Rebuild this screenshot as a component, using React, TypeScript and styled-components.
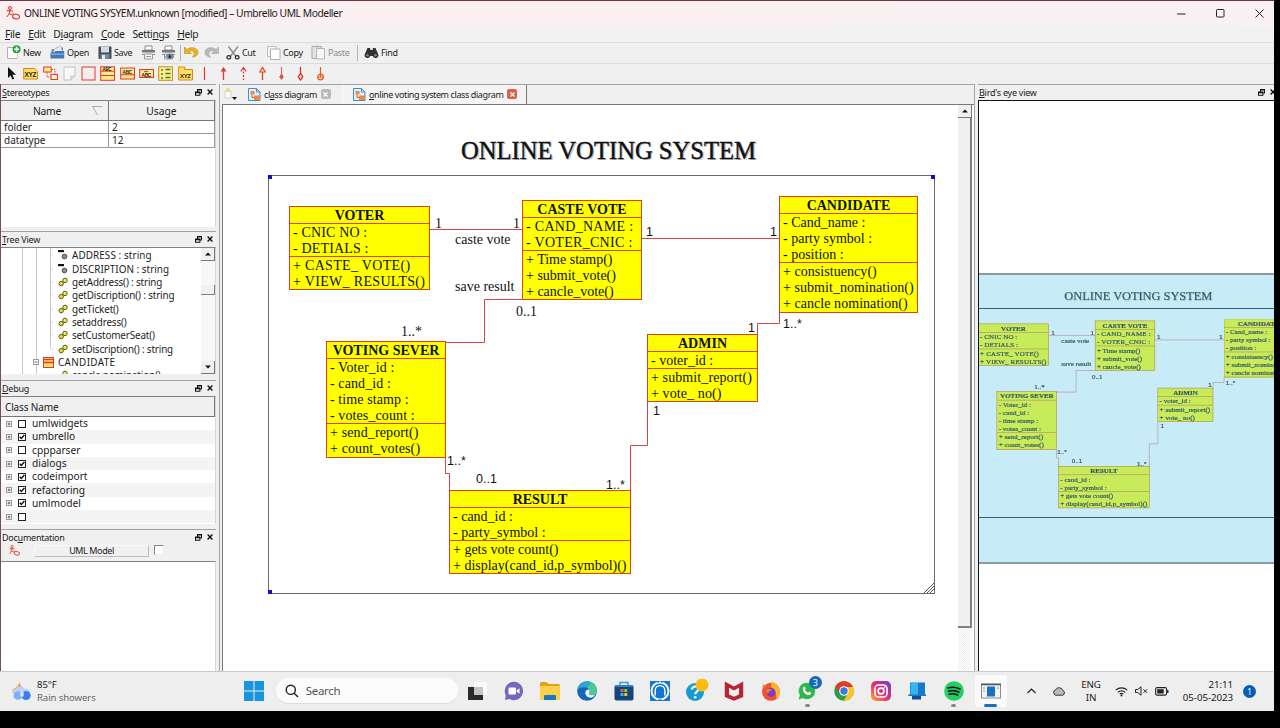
import React from "react";
import styled, { createGlobalStyle } from "styled-components";

const ui = `"Noto Sans", "Open Sans", sans-serif`;

const Global = createGlobalStyle`
  html, body { margin: 0; padding: 0; background: #000; }
  *, *::before, *::after { box-sizing: border-box; }
  body { width: 1280px; height: 728px; overflow: hidden; }
  svg { display: block; flex: none; }
`;

/* ---------- window frame ---------- */

const Screen = styled.div`
  width: 1274px;
  height: 711px;
  display: flex;
  flex-direction: column;
  background: #f0f0f0;
  color: #1b1b1b;
  font-family: ${ui};
  overflow: hidden;
`;

const TitleBar = styled.header`
  height: 26px;
  flex: none;
  display: flex;
  align-items: center;
  padding-left: 6px;
  padding-bottom: 1px;
  border-top: 1px solid #6a3a44;
  background: linear-gradient(90deg, #fbeff0, #f9f1f4);
`;

const TitleText = styled.div`
  flex: 1;
  padding-left: 4px;
  font-size: 10.3px;
  letter-spacing: -0.45px;
  white-space: pre;
`;

const CaptionButtons = styled.div`
  display: flex;
  gap: 28px;
  padding-right: 9px;
`;

const MenuBar = styled.nav`
  height: 16px;
  flex: none;
  display: flex;
  align-items: center;
  gap: 8px;
  padding-left: 5px;
  background: #f3f2f2;
  font-size: 10.3px;
  letter-spacing: -0.32px;
`;

const ToolBar = styled.div<{ $h: number }>`
  height: ${(p) => p.$h}px;
  flex: none;
  display: flex;
  align-items: center;
  padding-bottom: 1px;
  border-top: 1px solid #dcdcdc;
  background: #f0f0f0;
`;

const Tool = styled.div<{ $w: number; $pad?: number; $off?: boolean }>`
  width: ${(p) => p.$w}px;
  flex: none;
  display: flex;
  align-items: center;
  gap: 2px;
  padding-left: ${(p) => p.$pad ?? 0}px;
  font-size: 9px;
  letter-spacing: -0.32px;
  white-space: nowrap;
  color: ${(p) => (p.$off ? "#8c8c8c" : "#1b1b1b")};
`;

const ToolRule = styled.div`
  width: 1px;
  height: 16px;
  margin-right: 3px;
  background: #b4b4b4;
`;

const Body = styled.main`
  flex: 1;
  min-height: 0;
  display: flex;
`;

/* ---------- docks ---------- */

const LeftDock = styled.aside`
  width: 219px;
  flex: none;
  display: flex;
  flex-direction: column;
  border-left: 1px solid #6e5254;
  padding-right: 3px;
`;

const Dock = styled.section<{ $h?: number }>`
  ${(p) => (p.$h ? `height: ${p.$h}px; flex: none;` : "flex: 1; min-height: 0;")}
  display: flex;
  flex-direction: column;
  border-top: 1px solid #a2a2a2;
`;

const DockHead = styled.div`
  height: 15px;
  flex: none;
  display: flex;
  align-items: center;
  justify-content: space-between;
  padding: 0 3px 1px 1px;
  font-size: 9px;
  letter-spacing: -0.25px;
  white-space: nowrap;
`;

const DockButtons = styled.div`
  display: flex;
  gap: 5px;
`;

const DockBody = styled.div<{ $h?: number }>`
  ${(p) => (p.$h ? `height: ${p.$h}px; flex: none;` : "flex: 1; min-height: 0;")}
  border-top: 1px solid #828282;
  border-right: 1px solid #d8d8d8;
  background: #fff;
  overflow: hidden;
`;

const Table = styled.div`
  display: grid;
  grid-template-columns: 108px 106px;
  font-size: 10px;
`;

const HeadCell = styled.div`
  height: 20px;
  display: flex;
  align-items: center;
  justify-content: center;
  gap: 31px;
  background: #f0f0f0;
  border-right: 1px solid #777;
  border-bottom: 1px solid #777;
  font-size: 10.3px;
`;

const SortName = styled.span`
  padding-left: 27px;
  letter-spacing: -0.2px;
`;

const Cell = styled.div`
  height: 13.4px;
  line-height: 12px;
  padding-left: 3px;
  border-right: 1px solid #999;
  border-bottom: 1px solid #999;
`;

const TreeBox = styled.div`
  height: 126px;
  display: flex;
`;

const TreeList = styled.div`
  flex: 1;
  overflow: hidden;
  padding-top: 0.5px;
  background: linear-gradient(#c8c8c8, #c8c8c8) 21px 0 / 1px 100% no-repeat,
    linear-gradient(#c8c8c8, #c8c8c8) 35px 0 / 1px 100% no-repeat,
    linear-gradient(#c8c8c8, #c8c8c8) 49px 0 / 1px 100px no-repeat;
`;

const TreeRow = styled.div<{ $pad: number; $ls?: number }>`
  height: 13.36px;
  display: flex;
  align-items: center;
  gap: 4px;
  padding-left: ${(p) => p.$pad}px;
  font-size: 9.9px;
  letter-spacing: ${(p) => p.$ls ?? -0.15}px;
  white-space: nowrap;
`;

const ScrollBar = styled.div`
  width: 14px;
  flex: none;
  display: flex;
  flex-direction: column;
  justify-content: space-between;
  background: #f8f8f8;
`;

const ScrollUpper = styled.div``;

const ScrollButton = styled.div`
  height: 13px;
  flex: none;
  display: flex;
  align-items: center;
  justify-content: center;
  background: #f0f0f0;
  border-right: 1px solid #777;
  border-bottom: 1px solid #777;
`;

const ScrollThumb = styled.div<{ $top: number; $h: number; $b: number }>`
  height: ${(p) => p.$h}px;
  margin-top: ${(p) => p.$top}px;
  background: #f0f0f0;
  border: 0 solid #808080;
  border-right-width: ${(p) => p.$b}px;
  border-bottom-width: ${(p) => p.$b}px;
`;

const ListHead = styled.div`
  height: 20px;
  display: flex;
  align-items: center;
  padding-left: 4px;
  background: #f0f0f0;
  border-right: 1px solid #777;
  border-bottom: 1px solid #777;
  font-size: 10px;
  letter-spacing: -0.15px;
`;

const CheckRow = styled.div<{ $alt: boolean }>`
  height: 13.3px;
  display: flex;
  align-items: center;
  padding-left: 5px;
  background: ${(p) => (p.$alt ? "#f4f4f4" : "#fff")};
  font-size: 10.2px;
  line-height: 13px;
`;

const CheckBox = styled.div`
  width: 8px;
  height: 8px;
  margin: 0 6px 0 6px;
  border: 1px solid #222;
  background: #fff;
`;

const DocRow = styled.div`
  height: 16px;
  flex: none;
  display: flex;
  align-items: flex-start;
  padding-left: 8px;
`;

const DocButton = styled.div`
  width: 115px;
  height: 12px;
  margin: 0 5px 0 14px;
  border: 1px solid;
  border-color: #f8f8f8 #bdbdbd #bdbdbd #f8f8f8;
  text-align: center;
  font-size: 9px;
  letter-spacing: -0.4px;
  line-height: 10px;
`;

const DocCheck = styled.div`
  width: 10px;
  height: 10px;
  background: #fff;
  border: 1px solid;
  border-color: #888 #eee #eee #888;
`;

/* ---------- centre ---------- */

const Centre = styled.section`
  width: 756px;
  flex: none;
  display: flex;
  flex-direction: column;
  border-left: 1px solid #a5a5a5;
  border-right: 1px solid #a5a5a5;
  padding-left: 2px;
`;

const Tabs = styled.div`
  height: 20px;
  flex: none;
  display: flex;
  border-top: 1px solid #a2a2a2;
`;

const Tab = styled.div<{ $w: number; $on?: boolean }>`
  width: ${(p) => p.$w}px;
  display: flex;
  align-items: center;
  gap: 3px;
  padding: 0 0 1px 10px;
  border-right: 1px solid ${(p) => (p.$on ? "#777" : "#fafafa")};
  background: ${(p) => (p.$on ? "#f4f4f4" : "#f0f0f0")};
  font-size: 9px;
  letter-spacing: -0.4px;
  white-space: nowrap;
`;

const TabTools = styled.div`
  width: 16px;
  padding: 2px 0 0 2px;
`;

const TabClose = styled.div<{ $on?: boolean }>`
  width: 10px;
  height: 10px;
  margin-left: 1px;
  border-radius: 2px;
  display: flex;
  align-items: center;
  justify-content: center;
  background: ${(p) => (p.$on ? "#d9624a" : "#b9b9b9")};
`;

const CanvasRow = styled.div`
  flex: 1;
  min-height: 0;
  display: flex;
  border-top: 1px solid #777;
  border-left: 1px solid #777;
  background: #fff;
`;

const Canvas = styled.div`
  position: relative;
  width: 735px;
  flex: none;
  overflow: hidden;
`;

const TrackScroll = styled(ScrollBar)`
  background: repeating-conic-gradient(#efefef 0 25%, #fff 0 50%) 0 0 / 2px 2px;
`;

/* ---------- diagram ---------- */

const Layer = styled.div`
  position: absolute;
  left: 0;
  top: 0;
  width: 735px;
  height: 578px;
  color: #111;
  font-family: "Liberation Serif", serif;
`;

const Heading = styled.div`
  position: absolute;
  left: 238px;
  top: 30px;
  font-size: 26px;
  line-height: 32px;
  white-space: nowrap;
  color: #111;
  -webkit-text-stroke: 0.4px #111;
  text-shadow: 1.5px 1px 0 #c4c4c4;
  transform: scaleX(0.947);
  transform-origin: 0 0;
`;

const Frame = styled.div`
  position: absolute;
  left: 45px;
  top: 70px;
  width: 667px;
  height: 419px;
  border: 1px solid #6a6a6a;
`;

const Handle = styled.div<{ $x: number; $y: number }>`
  position: absolute;
  left: ${(p) => p.$x}px;
  top: ${(p) => p.$y}px;
  width: 4px;
  height: 4px;
  background: #1010c8;
`;

const Node = styled.div<{ $x: number; $y: number; $w: number }>`
  position: absolute;
  left: ${(p) => p.$x}px;
  top: ${(p) => p.$y}px;
  width: ${(p) => p.$w}px;
  border: 1px solid #e0411c;
  background: #ff0;
  font-size: 14px;
  white-space: pre;
`;

const NodeTitle = styled.div`
  height: 15.5px;
  line-height: 17px;
  text-align: center;
  font-weight: 700;
`;

const NodeGroup = styled.div`
  border-top: 1px solid #e0411c;
  padding: 0 0 0 3px;
`;

const Member = styled.div<{ $ls: number }>`
  height: 16.2px;
  line-height: 17.4px;
  letter-spacing: ${(p) => p.$ls}px;
`;

const Label = styled.div<{ $x: number; $y: number; $sans?: boolean }>`
  position: absolute;
  left: ${(p) => p.$x}px;
  top: ${(p) => p.$y - 8}px;
  line-height: 16px;
  white-space: nowrap;
  font-family: ${(p) => (p.$sans ? `"Liberation Sans", sans-serif` : "inherit")};
  font-size: ${(p) => (p.$sans ? 12.5 : 14)}px;
`;

const Wires = styled.svg`
  position: absolute;
  left: 0;
  top: 0;
`;

/* ---------- bird's eye ---------- */

const RightDock = styled.aside`
  flex: 1;
  min-width: 0;
  display: flex;
  flex-direction: column;
  padding-left: 3px;
  overflow: hidden;
`;

const BirdHead = styled(DockHead)`
  width: 301px;
  height: 16px;
  border-top: 1px solid #a2a2a2;
`;

const BirdBody = styled.div`
  flex: 1;
  min-height: 0;
  border-left: 1px solid #111;
  border-top: 1px solid #111;
  background: #fff;
  padding-top: 172px;
`;

const BirdView = styled.div`
  position: relative;
  height: 291px;
  overflow: hidden;
  background: #fff;
`;

const BirdScale = styled.div`
  position: absolute;
  left: -34.5px;
  top: 0;
  transform: scale(0.5014);
  transform-origin: 0 0;
  -webkit-text-stroke: 0.45px #111;
`;

const BirdTint = styled.div`
  position: absolute;
  inset: 0;
  background: rgba(110, 203, 237, 0.38);
  border-top: 2px solid #8b9aa1;
  border-bottom: 2px solid #8b9aa1;
`;

const BirdRule = styled.div<{ $y: number }>`
  position: absolute;
  left: 0;
  right: 0;
  top: ${(p) => p.$y}px;
  height: 1px;
  background: #10202a;
`;

/* ---------- taskbar ---------- */

const TaskBar = styled.footer`
  height: 40px;
  flex: none;
  display: flex;
  align-items: center;
  padding-bottom: 1px;
  border-top: 1px solid #c9c9c9;
  background: #eeeeee;
`;

const Weather = styled.div`
  width: 236px;
  display: flex;
  align-items: center;
  gap: 6px;
  padding-left: 11px;
  font-size: 9.6px;
  line-height: 13px;
  letter-spacing: -0.1px;
  span { color: #666; }
`;

const Slot = styled.div`
  width: 36.7px;
  height: 36px;
  flex: none;
  display: flex;
  flex-direction: column;
  align-items: center;
  justify-content: center;
  position: relative;
`;

const SlotCard = styled.div`
  width: 32px;
  height: 32px;
  display: flex;
  align-items: center;
  justify-content: center;
  border-radius: 3px;
  background: #fafafa;
`;

const Running = styled.div<{ $on?: boolean }>`
  position: absolute;
  bottom: 2px;
  width: ${(p) => (p.$on ? 13 : 5)}px;
  height: 3px;
  border-radius: 2px;
  background: ${(p) => (p.$on ? "#1870c0" : "#8a8a8a")};
`;

const Badge = styled.div`
  position: absolute;
  left: 20px;
  top: 3px;
  width: 13px;
  height: 13px;
  border-radius: 50%;
  background: #1769c0;
  color: #fff;
  font-size: 9px;
  line-height: 13px;
  text-align: center;
`;

const Search = styled.div`
  width: 182px;
  height: 26px;
  margin: 0 1px 0 3px;
  display: flex;
  align-items: center;
  gap: 7px;
  padding-left: 9px;
  border-radius: 13px;
  background: #fbfbfb;
  border-bottom: 1px solid #dcdcdc;
  color: #555;
  font-size: 11.5px;
  letter-spacing: -0.3px;
`;

const Tray = styled.div`
  flex: 1;
  display: flex;
  align-items: center;
  padding-left: 18px;
  font-size: 9.8px;
  line-height: 13px;
  letter-spacing: -0.1px;
`;

const TrayIcon = styled.div<{ $w: number }>`
  width: ${(p) => p.$w}px;
  flex: none;
`;

const Lang = styled.div`
  width: 26px;
  margin: 0 11px 0 12px;
  text-align: center;
`;

const Clock = styled.div`
  width: 64px;
  text-align: right;
  margin-right: 10px;
`;

const Notice = styled.div`
  width: 13px;
  height: 13px;
  border-radius: 50%;
  background: #0b5cb4;
  color: #fff;
  font-size: 8px;
  line-height: 13px;
  text-align: center;
`;

/* ---------- small drawings ---------- */

const Svg = ({ s = 14, h, children, v }: { s?: number; h?: number; v?: string; children: React.ReactNode }) => (
  <svg width={s} height={h ?? s} viewBox={v ?? `0 0 ${s} ${h ?? s}`} fill="none">
    {children}
  </svg>
);

const Logo = ({ s = 14 }: { s?: number }) => (
  <Svg s={s} v="0 0 14 14">
    <g stroke="#e02a20" strokeWidth="1">
      <circle cx="4" cy="2" r="1.5" />
      <path d="M4 3.600L3.200 7.600M.8 4.600l6.200.4M3.200 7.600L.8 11M3.200 7.600l3.200 1.600" />
      <ellipse cx="10" cy="10.600" rx="3.500" ry="2.300" transform="rotate(12 10 10.600)" />
      <path d="M6.400 6.800L8 9" />
    </g>
  </Svg>
);

const FloatIcon = () => (
  <Svg s={7}>
    <path d="M2 0h5v4.5H5.4V6.8H0V2.6h2z" fill="#111" />
    <path d="M1 4.2h3.4v1.6H1zM3 1.6h3v1.8h-.6v-.8H3z" fill="#f0f0f0" />
  </Svg>
);

const CloseIcon = ({ s = 6, c = "#111", w = 1.4 }: { s?: number; c?: string; w?: number }) => (
  <Svg s={s} v="0 0 6 6">
    <path d="M.6.6l4.8 4.8M5.4.6L.6 5.4" stroke={c} strokeWidth={w} />
  </Svg>
);

const Head = ({ k, rest, pre = "" }: { pre?: string; k: string; rest: string }) => (
  <DockHead>
    <span>{pre}<u>{k}</u>{rest}</span>
    <DockButtons><FloatIcon /><CloseIcon /></DockButtons>
  </DockHead>
);

const Arrow = ({ down }: { down?: boolean }) => (
  <Svg s={6} h={4}><path d={down ? "M0 .5h6L3 3.5z" : "M0 3.5h6L3 .5z"} fill="#111" /></Svg>
);

const NewIcon = () => (
  <Svg s={15} h={15}>
    <path d="M1.5 2.500h6M11 9v4.500H1.500V2.500" stroke="#b0b0b0" fill="#fff" />
    <path d="M2 3h6l3 5v5H2z" fill="#fdfdfd" />
    <circle cx="10.600" cy="4.200" r="4" fill="#2fa13a" />
    <path d="M10.600 1.800v4.800M8.200 4.200H13" stroke="#fff" strokeWidth="1.600" />
  </Svg>
);
const OpenIcon = () => (
  <Svg s={15}>
    <path d="M1.500 4h4l1-1.500h6.500V12H1.500z" fill="#7f8d9c" />
    <path d="M4 4.500L10.500.800l2.500 7H4z" fill="#e9eef4" stroke="#99a" strokeWidth=".5" />
    <path d="M.500 7.500h4l1-1.500h8.700v7.500H.500z" fill="#4179b8" />
    <path d="M.500 8.500h13.700v1.500H.500z" fill="#7eaada" />
  </Svg>
);
const SaveIcon = () => (
  <Svg s={14}>
    <rect x=".5" y=".5" width="13" height="12.5" rx="1" fill="#46494d" />
    <rect x="3" y=".5" width="8" height="6" fill="#cfdbe6" />
    <rect x="2.5" y="8" width="9" height="5" fill="#70879c" />
    <rect x="4" y="9" width="3" height="4" fill="#e8e8e8" />
  </Svg>
);
const PrintIcon = ({ eye }: { eye?: boolean }) => (
  <Svg s={15}>
    <path d="M4 1h7v4H4z" fill="#fff" stroke="#8a8a8a" />
    <rect x=".8" y="5" width="13.4" height="2.600" rx="1" fill="#777" />
    <path d="M1 9.500h13" stroke="#8a8a8a" />
    <path d="M3.5 9h8V14h-8z" fill="#f4f4f4" stroke="#999" />
    <path d="M5 11.500h5" stroke="#999" />
    {eye && <path d="M4.500 11.500c2-3 6-3 8.500 0-2.500 2.600-6.500 2.600-8.500 0z" fill="#7fa6bf" stroke="#456" strokeWidth=".7" />}
    {eye && <circle cx="8.800" cy="11.400" r="1.500" fill="#234" />}
  </Svg>
);
const UndoIcon = ({ redo }: { redo?: boolean }) => (
  <Svg s={15} h={13}>
    <g transform={redo ? "matrix(-1 0 0 1 15 0)" : undefined}>
      <path d="M.5 1v6.500h6.800L5 5.400c2-1.300 5.200-.6 5.200 2 0 1.600-.8 2.600-2 3.800 3.400-.4 5.800-2.200 5.800-5C14 1.700 7 .2 3 3.400z" fill={redo ? "#b9b9b9" : "#e8b423"} stroke={redo ? "#a2a2a2" : "#b98911"} strokeWidth=".6" />
    </g>
  </Svg>
);
const CutIcon = () => (
  <Svg s={14}>
    <path d="M2.500.500L9.600 10M12 .5L4.600 10" stroke="#8b8b8b" strokeWidth="1.400" />
    <ellipse cx="2.800" cy="11.300" rx="1.900" ry="1.700" stroke="#222" strokeWidth="1.200" />
    <ellipse cx="11.200" cy="11.300" rx="1.900" ry="1.700" stroke="#222" strokeWidth="1.200" />
  </Svg>
);
const CopyIcon = () => (
  <Svg s={14}>
    <path d="M.500.500h8.500v10H.500z" fill="#f6f6f6" stroke="#bdbdbd" />
    <path d="M3.500 3h9.500v10.500H3.500z" fill="#fff" stroke="#b0b0b0" />
  </Svg>
);
const PasteIcon = () => (
  <Svg s={15}>
    <path d="M1 1.500h9.500V13.500H1z" fill="#e2e2e2" stroke="#a9a9a9" />
    <path d="M3.500.500h4v2h-4z" fill="#bbb" />
    <path d="M5.500 3.500h8v10.500h-8z" fill="#f6f6f6" stroke="#b5b5b5" />
  </Svg>
);
const FindIcon = () => (
  <Svg s={15} h={12}>
    <path d="M3.500 1h2.500l.5 2h2L9 1h2.500l2.800 6.500a2.800 2.800 0 11-5.400 1.500H6.100A2.800 2.800 0 11.700 7.500z" fill="#33312f" />
    <circle cx="3.400" cy="8.200" r="1.200" fill="#888" /><circle cx="11.600" cy="8.200" r="1.200" fill="#888" />
  </Svg>
);

const Glyph = styled.text`
  font-family: "Liberation Sans", sans-serif;
  font-weight: 700;
  fill: #222;
`;

const paint = { stroke: "#e23a28", fill: "#ffe98a" };

const palette: React.ReactNode[] = [
  <path d="M4 1v11l2.600-2.600 1.900 4 1.700-.8-1.900-3.800H12z" fill="#111" />,
  <><path d="M.700 2.500h11l2.800 3V13H.700z" {...paint} stroke="#d9861a" fill="#ffdf5e" /><Glyph x="1.600" y="10.500" fontSize="6.500">XYZ</Glyph></>,
  <><rect x=".7" y="1" width="7.500" height="5" {...paint} /><rect x="8" y="8.500" width="6.500" height="5" {...paint} fill="#fff4c8" /><path d="M8.500 3.500h3.500v5M4 6.500v4.500h4" stroke="#e23a28" strokeDasharray="1.500 1" /></>,
  <path d="M2 1h11v9l-4 4H2zM13 10H9v4" fill="#f7f7f7" stroke="#c2c2c2" />,
  <rect x="1" y="1" width="13" height="13" stroke="#e23a28" fill="#f6eeee" />,
  <><rect x=".7" y=".800" width="13.800" height="13.500" {...paint} /><path d="M1 5.200h13.500M1 9.500h13.500" stroke="#e23a28" /><Glyph x="2.500" y="4.700" fontSize="4.500">ABC</Glyph></>,
  <><rect x=".7" y="2" width="13.800" height="11" {...paint} /><path d="M1 8.800h13.500" stroke="#e23a28" /><Glyph x="2.500" y="7.500" fontSize="4.800">ABC</Glyph></>,
  <><rect x=".7" y="3.500" width="13.800" height="8" {...paint} /><Glyph x="5" y="7" fontSize="4">«»</Glyph><Glyph x="2.500" y="10.800" fontSize="4.800">ABC</Glyph></>,
  <><rect x=".7" y=".8" width="13.800" height="13.500" {...paint} stroke="#d9861a" fill="#f8f08a" /><path d="M3 4h2M3 8h2M3 12h2M7.500 3.500h5M7.500 7.500h5M7.500 11.500h5" stroke="#3b7d2a" strokeWidth="1.600" /></>,
  <><path d="M.700 3.500V1h6v2.500h7.800V14H.700z" {...paint} stroke="#d9861a" fill="#ffdf5e" /><Glyph x="2" y="11.500" fontSize="6">XYZ</Glyph></>,
  <path d="M7.500 1v13" stroke="#e03a30" strokeWidth="1.200" />,
  <><path d="M7.500 2v12" stroke="#e03a30" strokeWidth="1.300" /><path d="M4.500 5.500l3-4.500 3 4.500z" fill="#e03a30" /></>,
  <><path d="M7.500 2v12" stroke="#e03a30" strokeWidth="1.300" strokeDasharray="2 1.500" /><path d="M4.800 5.500L7.500 1.500l2.700 4" stroke="#e03a30" strokeWidth="1.200" /></>,
  <><path d="M7.500 5v9" stroke="#e03a30" strokeWidth="1.300" /><path d="M4.800 6l2.700-4.500L10.200 6z" fill="#fff0c0" stroke="#d9451c" strokeWidth="1.200" /></>,
  <><path d="M7.500 1v9" stroke="#e46a60" strokeWidth="1.200" /><path d="M7.500 7.500L9.800 10.700 7.500 14l-2.300-3.300z" fill="#d8534a" /></>,
  <><path d="M7.500 1v7" stroke="#d8302a" strokeWidth="1.300" /><path d="M7.500 7.500L9.800 10.700 7.500 14l-2.300-3.300z" fill="#ffe9b0" stroke="#d8302a" strokeWidth="1.300" /></>,
  <><path d="M7.500 1v9" stroke="#d8652a" strokeWidth="1.200" /><circle cx="7.500" cy="11" r="2.800" fill="#ffe9b0" stroke="#e05a20" strokeWidth="1.200" /><path d="M5 11h5M7.500 8.500V11" stroke="#e05a20" /></>,
];

const DocIcon = () => (
  <Svg s={13} h={13}>
    <path d="M.5.500h8l3.500 3.500v8.500H.5z" fill="#dff0fb" stroke="#3d8fc6" />
    <path d="M8.500.500V4H12" stroke="#3d8fc6" />
    <rect x="2.500" y="3" width="4" height="3.500" fill="#f0874a" /><rect x="6" y="7.500" width="6" height="4.500" fill="#f0874a" />
    <path d="M4 6.500v3h2" stroke="#d65b20" />
  </Svg>
);

const Chain = () => (
  <Svg s={10} h={10}>
    <circle cx="3.200" cy="6.600" r="2.200" fill="#e8df3a" stroke="#5c5710" />
    <circle cx="7" cy="3.400" r="2.200" fill="#f2ec5a" stroke="#5c5710" />
  </Svg>
);
const Field = () => (
  <Svg s={10} h={10}>
    <path d="M0 0h6v2.200H0z" fill="#111" />
    <circle cx="6.500" cy="6.500" r="2.300" fill="#8e8e98" stroke="#444" />
  </Svg>
);
const Dash = ({ w = 6 }: { w?: number }) => (
  <Svg s={w} h={2}><path d={`M0 1h${w}`} stroke="#b8b8b8" strokeDasharray="1 1" /></Svg>
);
const Expander = ({ open }: { open?: boolean }) => (
  <Svg s={6} h={6}>
    <rect x=".5" y=".5" width="5" height="5" stroke="#999" fill="#fff" />
    <path d={open ? "M1.500 3h3" : "M1.500 3h3M3 1.500v3"} stroke="#444" strokeWidth=".8" />
  </Svg>
);
const ClassIcon = () => (
  <Svg s={11}><rect x=".5" y=".5" width="10" height="10" fill="#ffe36a" stroke="#e23a28" /><path d="M.5 2.500h10M.5 5.500h10" stroke="#e23a28" strokeWidth="1.300" /></Svg>
);

/* ---------- data ---------- */

type NodeData = { x: number; y: number; w: number; title: string; a: string[]; m: string[]; ls?: number; mls?: number };

const nodes: NodeData[] = [
  { x: 66, y: 101, w: 141, title: "VOTER", a: ["- CNIC NO :", "- DETIALS :"], m: ["+ CASTE_ VOTE()", "+ VIEW_ RESULTS()"], ls: 0.15, mls: 0.32 },
  { x: 299, y: 95, w: 120, title: "CASTE VOTE", a: ["- CAND_NAME :", "- VOTER_CNIC :"], m: ["+ Time stamp()", "+ submit_vote()", "+ cancle_vote()"], ls: 0.3 },
  { x: 556, y: 91, w: 139, title: "CANDIDATE", a: ["- Cand_name :", "- party symbol :", "- position :"], m: ["+ consistuency()", "+ submit_nomination()", "+ cancle nomination()"], mls: 0.05 },
  { x: 424, y: 229, w: 111, title: "ADMIN", a: ["- voter_id :"], m: ["+ submit_report()", "+ vote_ no()"], mls: 0.1 },
  { x: 103, y: 236, w: 120, title: "VOTING SEVER", a: ["- Voter_id :", "- cand_id :", "- time stamp :", "- votes_count :"], m: ["+ send_report()", "+ count_votes()"], ls: 0.1, mls: 0.12 },
  { x: 226, y: 385, w: 182, title: "RESULT", a: ["- cand_id :", "- party_symbol :"], m: ["+ gets vote count()", "+ display(cand_id,p_symbol)()"] },
];

const wires = [
  "M207 124.500H300",
  "M418 133.500H557",
  "M300 194.500H261.500V237.500H222",
  "M556.500 207V218.500H534.500V230",
  "M424.500 296V340.500H407.500V386",
  "M222.500 353V368.500H226.500V386",
];

const labels: { x: number; y: number; t: string; sans?: boolean }[] = [
  { x: 212, y: 119, t: "1" },
  { x: 290, y: 119, t: "1" },
  { x: 232, y: 135, t: "caste vote" },
  { x: 232, y: 182, t: "save result" },
  { x: 293, y: 207, t: "0..1" },
  { x: 178, y: 227, t: "1..*" },
  { x: 423, y: 127, t: "1", sans: true },
  { x: 547, y: 127, t: "1", sans: true },
  { x: 525, y: 223, t: "1", sans: true },
  { x: 560, y: 219, t: "1..*", sans: true },
  { x: 430, y: 306, t: "1", sans: true },
  { x: 224, y: 356, t: "1..*", sans: true },
  { x: 253, y: 374, t: "0..1", sans: true },
  { x: 383, y: 380, t: "1..*", sans: true },
];

const Diagram = () => (
  <Layer>
    <Heading>ONLINE VOTING SYSTEM</Heading>
    {nodes.map((n) => (
      <Node key={n.title} $x={n.x} $y={n.y} $w={n.w}>
        <NodeTitle>{n.title}</NodeTitle>
        <NodeGroup>{n.a.map((t) => <Member key={t} $ls={n.ls ?? 0}>{t}</Member>)}</NodeGroup>
        <NodeGroup>{n.m.map((t) => <Member key={t} $ls={n.mls ?? 0}>{t}</Member>)}</NodeGroup>
      </Node>
    ))}
    <Wires width="735" height="578" fill="none" stroke="#d8424a" strokeWidth="1">
      {wires.map((d) => <path key={d} d={d} />)}
    </Wires>
    {labels.map((l, i) => <Label key={i} $x={l.x} $y={l.y} $sans={l.sans}>{l.t}</Label>)}
  </Layer>
);

const treeRows: [string, string, number?][] = [
  ["f", "ADDRESS : string", 0.1],
  ["f", "DISCRIPTION : string", 0.02],
  ["m", "getAddress() : string"],
  ["m", "getDiscription() : string"],
  ["m", "getTicket()"],
  ["m", "setaddress()"],
  ["m", "setCustomerSeat()"],
  ["m", "setDiscription() : string"],
];

const checks: [string, boolean][] = [
  ["umlwidgets", false], ["umbrello", true], ["cppparser", false], ["dialogs", true],
  ["codeimport", true], ["refactoring", true], ["umlmodel", true], ["", false],
];

/* ---------- taskbar icons ---------- */

const I = ({ children }: { children: React.ReactNode }) => <Svg s={20}>{children}</Svg>;

const taskIcons: React.ReactNode[] = [
  <I><rect x="7" y="1" width="13" height="13" fill="#fafafa" /><path d="M1 6h8v6h7v7H1z" fill="#2a2a2a" /><rect x="7" y="6" width="9" height="8" fill="#c4c4c4" /></I>,
  <I><path d="M10 .800a9.200 9.200 0 11-4.500 17.300L1 19l.8-4.600A9.200 9.200 0 0110 .800z" fill="#7467bd" /><rect x="4.500" y="6.500" width="7.500" height="7" rx="1.300" fill="#fff" /><path d="M12.500 9.500l3-2.300v5.600l-3-2.300z" fill="#fff" /></I>,
  <I><path d="M0 2.500A1.500 1.500 0 011.500 1h5l2 2H18a2 2 0 012 2v12H0z" fill="#e2a313" /><path d="M0 5h20v12.500a1.500 1.500 0 01-1.500 1.500h-17A1.500 1.500 0 010 17.500z" fill="#fccf4c" /><path d="M4 15a1 1 0 011-1h10a1 1 0 011 1v4H4z" fill="#1b78bd" /></I>,
  <I>
    <circle cx="10" cy="10" r="9.800" fill="#1466b6" />
    <path d="M.3 9C1.500 3 5.500.200 10.200.200c6 0 9.600 4.600 9.600 9 0 3.300-2.200 5-4.800 5-1.900 0-3.300-.8-3.300-1.700 0-.6.8-1.100.8-2.500 0-2-2-3.800-4.800-3.800C4.500 6.200 1.500 7 .3 9z" fill="#2aa7d4" />
    <path d="M13 .700c4.300 1.300 6.800 4.900 6.800 8.500 0 3.300-2.200 5-4.800 5-1.900 0-3.300-.8-3.300-1.700 0-.6.800-1.100.800-2.500 0-2-1-3-2.500-3.800C12 5 13.500 3 13 .700z" fill="#4cc98c" />
    <path d="M11.700 12.500c0 .9 1.400 1.700 3.300 1.700 1.300 0 2.500-.4 3.400-1.200-.8 1.500-2 2.800-3.300 3.600-3.600.8-7-2-6.800-5.100.1-1.500 1.500-3.200 3.500-3 1.200 1.500.7 2.600.3 3.200-.2.300-.4.500-.4.800z" fill="#eef7fa" />
  </I>,
  <I><path d="M6 4V1.500h8V4" stroke="#3f9fe0" strokeWidth="1.500" /><rect x=".500" y="4" width="19" height="15.500" rx="2" fill="#17447e" /><path d="M1 4h18v2H1z" fill="#2e83c6" /><path d="M6.500 8h3v3h-3z" fill="#f0602c" /><path d="M10.300 8h3v3h-3z" fill="#8cc63e" /><path d="M6.500 12h3v3h-3z" fill="#38b0e8" /><path d="M10.300 12h3v3h-3z" fill="#fbbf24" /></I>,
  <I><rect width="20" height="20" fill="#1277d0" /><circle cx="10" cy="10" r="8.500" stroke="#fff" strokeWidth="2" /><path d="M5.200 14.500V9.500a4.800 4.800 0 019.600 0v5" stroke="#fff" strokeWidth="1.400" /><path d="M6.500 16V8.500c0-2 1.500-3 3.500-3s3.500 1 3.500 3V16L10 13.500z" fill="#1277d0" /><path d="M7 .800h2M11 .800h2M8 19.300h4" stroke="#1277d0" strokeWidth="1.500" /></I>,
  <Svg s={24} h={24}><circle cx="10" cy="13" r="9" fill="#1a9ad2" /><path d="M7 10.500c0-4 6.200-3.800 6.200-.2 0 2.400-3 2.400-3 4.900" stroke="#fff" strokeWidth="2.100" /><circle cx="10.200" cy="18.200" r="1.300" fill="#fff" /><circle cx="17" cy="6" r="6.500" fill="#fbbc0d" /></Svg>,
  <I><path d="M.800.500L10 5.500l9.200-5v15.500L10 19.800.800 16z" fill="#b72534" /><path d="M5 6.800l5 2.700 5-2.700v6.800l-5 2.200-5-2.200z" fill="#f0eeee" /></I>,
  <I><circle cx="10" cy="10.800" r="9" fill="#f4512c" /><path d="M11 .500c4 1.500 8.200 5 8 10.500-.2 3-2 5.500-4 6.500 1-5-1-8-4-9.500-1.500-2-1-5 0-7.500z" fill="#fdb52a" /><path d="M1.500 7c-.3-2 .8-4 .8-4L5 5.500z" fill="#f7833a" /><circle cx="10" cy="11.200" r="4.500" fill="#7a3fc0" /><path d="M5.500 9c1.500-1.500 4-1.500 5.500 0l-3 1.500c0 2-1.500 2-2.500 1z" fill="#fb7b35" /></I>,
  <><Svg s={20}><path d="M10 1.500a8.500 8.500 0 11-4.200 15.900L1 19l1.500-4.700A8.500 8.500 0 0110 1.500z" fill="#2cb84c" stroke="#f4fff4" strokeWidth=".6" /><path d="M6.300 6.200c.8-1.300 1.700-.6 2.300 1.200.2.700-.8 1-.6 1.500.7 1.300 1.600 2 2.900 2.700.6.200.9-1 1.500-.8 1.700.7 2.200 1 1.700 2-1 1.700-3 1.600-5 .400-2.300-1.300-4-4.700-2.800-7z" fill="#fff" /></Svg><Badge>3</Badge></>,
  <I><circle cx="10" cy="10" r="9.800" fill="#2b9f48" /><path d="M1.500 5.100A9.800 9.800 0 0118.500 5.100L19 6H10L5.700 12.500z" fill="#de3b2c" /><path d="M19 6a9.800 9.800 0 01-9.300 13.800L14 12 11.500 6z" fill="#fcc41c" /><circle cx="10" cy="10" r="4.800" fill="#fff" /><circle cx="10" cy="10" r="3.700" fill="#3a78e6" /></I>,
  <I><defs><linearGradient id="ig" x1="0" y1="1" x2="1" y2="0"><stop offset="0" stopColor="#fdb03a" /><stop offset=".45" stopColor="#e8306c" /><stop offset="1" stopColor="#6a3fd0" /></linearGradient></defs><rect width="20" height="20" rx="5" fill="url(#ig)" /><rect x="4" y="4" width="12" height="12" rx="3.500" stroke="#fff" strokeWidth="1.600" /><circle cx="10" cy="10" r="2.900" stroke="#fff" strokeWidth="1.600" /><circle cx="13.500" cy="6.500" r=".9" fill="#fff" /></I>,
  <I><path d="M3 1.500h15v11l1.500 2.500H.500L3 12.500z" fill="#1979c9" /><path d="M3.500 2h7.500v11.500H3.500z" fill="#35b4f0" /><path d="M5 15h9v3.500H5z" fill="#0f4f91" /></I>,
  <I><circle cx="10" cy="10" r="9.800" fill="#23cf5f" /><path d="M4 7c4.500-1.300 8.500-.8 12 1M4.700 10.200c3.800-1 7.200-.6 10.200 1M5.300 13.200c3-.8 5.700-.5 8.200.9" stroke="#112" strokeWidth="1.700" strokeLinecap="round" /></I>,
];

export default function App() {
  return (
    <>
      <Global />
      <Screen>
        <TitleBar>
          <Logo />
          <TitleText>ONLINE VOTING SYSYEM.unknown [modified] – Umbrello UML Modeller</TitleText>
          <CaptionButtons>
            <Svg s={11}><path d="M1 6h8.500" stroke="#222" /></Svg>
            <Svg s={11}><rect x="1.500" y="1.500" width="7.500" height="7.500" rx=".8" stroke="#222" /></Svg>
            <Svg s={11}><path d="M1.500 1.500l8 8M9.500 1.500l-8 8" stroke="#222" /></Svg>
          </CaptionButtons>
        </TitleBar>
        <MenuBar>
          <span><u>F</u>ile</span>
          <span><u>E</u>dit</span>
          <span>D<u>i</u>agram</span>
          <span><u>C</u>ode</span>
          <span>Setti<u>n</u>gs</span>
          <span><u>H</u>elp</span>
        </MenuBar>
        <ToolBar $h={21}>
          <Tool $w={50} $pad={6}><NewIcon />New</Tool>
          <Tool $w={48}><OpenIcon />Open</Tool>
          <Tool $w={43}><SaveIcon />Save</Tool>
          <Tool $w={20}><PrintIcon /></Tool>
          <Tool $w={19}><PrintIcon eye /></Tool>
          <ToolRule />
          <Tool $w={20}><UndoIcon /></Tool>
          <Tool $w={22}><UndoIcon redo /></Tool>
          <Tool $w={41}><CutIcon />Cut</Tool>
          <Tool $w={44}><CopyIcon />Copy</Tool>
          <Tool $w={46} $off><PasteIcon />Paste</Tool>
          <ToolRule />
          <Tool $w={45} $pad={3}><FindIcon />Find</Tool>
        </ToolBar>
        <ToolBar $h={21}>
          <Tool $w={4}> </Tool>
          {palette.map((p, i) => <Tool key={i} $w={19.3}><Svg s={15}>{p}</Svg></Tool>)}
        </ToolBar>
        <Body>
          <LeftDock>
            <Dock $h={147}>
              <Head k="S" rest="tereotypes" />
              <DockBody $h={127}>
                <Table>
                  <HeadCell>
                    <SortName>Name</SortName>
                    <Svg s={11} h={9}><path d="M.500.500h10M.500.500L5.500 9" stroke="#aaa" /></Svg>
                  </HeadCell>
                  <HeadCell>Usage</HeadCell>
                  <Cell>folder</Cell><Cell>2</Cell>
                  <Cell>datatype</Cell><Cell>12</Cell>
                </Table>
              </DockBody>
            </Dock>
            <Dock $h={149}>
              <Head k="T" rest="ree View" />
              <DockBody $h={127}>
                <TreeBox>
                  <TreeList>
                    {treeRows.map(([k, t, ls]) => (
                      <TreeRow key={t} $pad={49} $ls={ls}><Dash w={4} />{k === "f" ? <Field /> : <Chain />}{t}</TreeRow>
                    ))}
                    <TreeRow $pad={32} $ls={0.35}><Expander open /><ClassIcon />CANDIDATE</TreeRow>
                    <TreeRow $pad={57}><Chain />cancle nomination()</TreeRow>
                  </TreeList>
                  <ScrollBar>
                    <ScrollUpper>
                      <ScrollButton><Arrow /></ScrollButton>
                      <ScrollThumb $top={24} $h={10} $b={1} />
                    </ScrollUpper>
                    <ScrollButton><Arrow down /></ScrollButton>
                  </ScrollBar>
                </TreeBox>
              </DockBody>
            </Dock>
            <Dock $h={149}>
              <Head k="D" rest="ebug" />
              <DockBody $h={128}>
                <ListHead>Class Name</ListHead>
                {checks.map(([t, on], i) => (
                  <CheckRow key={i} $alt={i % 2 === 1}>
                    <Expander />
                    <CheckBox>{on && <Svg s={6}><path d="M.800 2.800l1.500 1.700L5.400 1" stroke="#111" strokeWidth="1.400" /></Svg>}</CheckBox>
                    {t}
                  </CheckRow>
                ))}
              </DockBody>
            </Dock>
            <Dock>
              <Head pre="Doc" k="u" rest="mentation" />
              <DocRow>
                <Logo s={11} />
                <DocButton>UML Model</DocButton>
                <DocCheck />
              </DocRow>
              <DockBody />
            </Dock>
          </LeftDock>
          <Centre>
            <Tabs>
              <TabTools>
                <Svg s={14}><path d="M1 4h6v7H1z" fill="#fbfbfb" stroke="#d8d0b8" /><circle cx="4" cy="3" r="2" fill="#f2d675" /><path d="M8 10h5l-2.500 3z" fill="#111" /></Svg>
              </TabTools>
              <Tab $w={105}><DocIcon /><span>cl<u>a</u>ss diagram</span><TabClose><CloseIcon s={5} c="#fff" /></TabClose></Tab>
              <Tab $w={184} $on><DocIcon /><span><u>o</u>nline voting system class diagram</span><TabClose $on><CloseIcon s={5} c="#fff" /></TabClose></Tab>
            </Tabs>
            <CanvasRow>
              <Canvas>
                <Frame />
                <Diagram />
                <Handle $x={45} $y={70} />
                <Handle $x={708} $y={70} />
                <Handle $x={45} $y={485} />
                <Wires width="735" height="560" fill="none" stroke="#555">
                  <path d="M701 488l10-10M704 488l7-7M707 488l4-4" />
                </Wires>
              </Canvas>
              <TrackScroll>
                <ScrollUpper>
                  <ScrollButton><Arrow /></ScrollButton>
                  <ScrollThumb $top={0} $h={510} $b={2} />
                </ScrollUpper>
              </TrackScroll>
            </CanvasRow>
          </Centre>
          <RightDock>
            <BirdHead>
              <span><u>B</u>ird's eye view</span>
              <DockButtons><FloatIcon /><CloseIcon /></DockButtons>
            </BirdHead>
            <BirdBody>
              <BirdView>
                <BirdScale><Diagram /></BirdScale>
                <BirdRule $y={35} />
                <BirdRule $y={244} />
                <BirdTint />
              </BirdView>
            </BirdBody>
          </RightDock>
        </Body>
        <TaskBar>
          <Weather>
            <Svg s={20}>
              <path d="M9 0c-.5 4 1.500 6 5 8l-2 3H3L1 8.500C4.500 8 8 4 9 0z" fill="#eba63a" />
              <path d="M1 12.500a4 4 0 013.500-4.300 5 5 0 019-.2 4 4 0 015.500 4.500z" fill="#bcd3f3" />
              <ellipse cx="7" cy="14.500" rx="4.500" ry="4.300" fill="#7fb0f5" /><ellipse cx="15" cy="14.500" rx="4.700" ry="4.500" fill="#3b7df0" />
              <ellipse cx="11" cy="13" rx="1.800" ry="3" fill="#d5e4fa" />
            </Svg>
            <div>85°F<br /><span>Rain showers</span></div>
          </Weather>
          <Slot>
            <Svg s={20}><path d="M0 0h9.500v9.500H0zM10.500 0H20v9.500h-9.500zM0 10.500h9.500V20H0zM10.500 10.500H20V20h-9.500z" fill="#1795e0" /></Svg>
          </Slot>
          <Search>
            <Svg s={14}><circle cx="5.800" cy="5.800" r="4.600" stroke="#222" strokeWidth="1.400" /><path d="M9 9l4 4" stroke="#222" strokeWidth="1.500" /></Svg>
            Search
          </Search>
          {taskIcons.map((ic, i) => (
            <Slot key={i}>{ic}{(i === 9 || i === 13) && <Running />}</Slot>
          ))}
          <Slot>
            <SlotCard>
              <Svg s={20} h={16}><rect x=".5" y="1" width="19" height="14" fill="#f4f4f4" stroke="#8c8c8c" /><path d="M0 1.500h20" stroke="#555" strokeWidth="1.500" /><rect x="6" y="3.500" width="8" height="10" fill="#1a70c4" /><path d="M2 5h2M2 8h2M16 5h2" stroke="#88a" /></Svg>
            </SlotCard>
            <Running $on />
          </Slot>
          <Tray>
            <TrayIcon $w={25}><Svg s={9} h={6}><path d="M.5 5l4-4 4 4" stroke="#222" strokeWidth="1.200" /></Svg></TrayIcon>
            <TrayIcon $w={14}><Svg s={14} h={10}><path d="M3.500 9.200a3 3 0 01.2-5.600 4 4 0 017.200.9 2.500 2.500 0 01-.2 4.700z" fill="#b9b9b9" stroke="#333" /></Svg></TrayIcon>
            <Lang>ENG<br />IN</Lang>
            <TrayIcon $w={20}><Svg s={13} h={11}><path d="M.800 4.200a8.200 8.200 0 0111.400 0M2.800 6.300a5.400 5.400 0 017.400 0M4.700 8.200a2.700 2.700 0 013.600 0" stroke="#222" strokeWidth="1.100" /><circle cx="6.500" cy="9.500" r="1" fill="#222" /></Svg></TrayIcon>
            <TrayIcon $w={20}><Svg s={13} h={10}><path d="M.5 3.500h2.200L6 .8v8.400L2.700 6.500H.5zM8.500 3.300l3.600 3.600M12.100 3.300L8.500 6.900" stroke="#222" /></Svg></TrayIcon>
            <TrayIcon $w={14}><Svg s={14} h={9}><rect x=".6" y=".6" width="11" height="7.500" rx="1.500" stroke="#222" strokeWidth="1.100" /><rect x="2.200" y="2.200" width="6.500" height="4.300" fill="#222" /><path d="M12.800 3v3" stroke="#222" strokeWidth="1.300" /></Svg></TrayIcon>
            <Clock>21:11<br />05-05-2023</Clock>
            <Notice>1</Notice>
          </Tray>
        </TaskBar>
      </Screen>
    </>
  );
}
